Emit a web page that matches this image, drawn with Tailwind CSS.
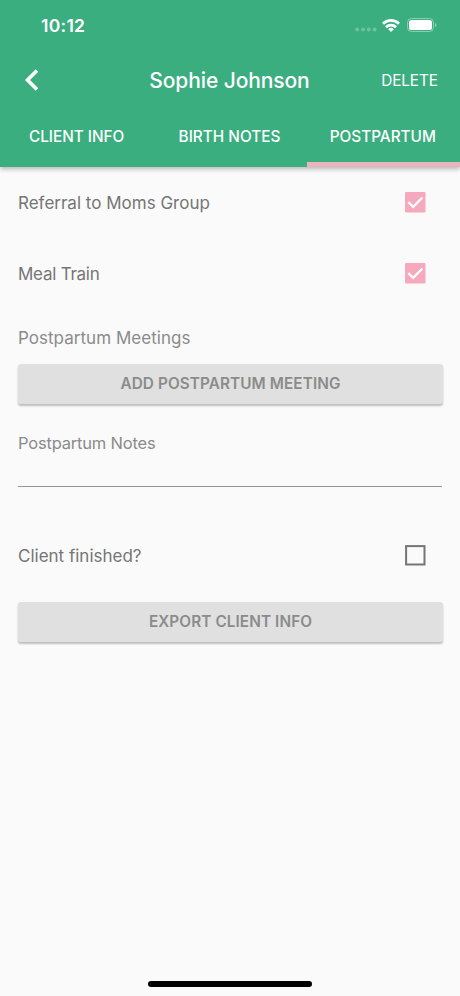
<!DOCTYPE html>
<html lang="en">
<head>
<meta charset="utf-8">
<title>Sophie Johnson</title>
<script src="https://cdn.jsdelivr.net/npm/@tailwindcss/browser@4"></script>
</head>
<body class="bg-[#fafafa]">
<div class="w-[460px] h-[996px] flex flex-col overflow-hidden bg-[#fafafa] font-['Inter',sans-serif] text-[#757575] whitespace-nowrap">
  <header class="h-[167px] shrink-0 flex flex-col bg-[#3aae7f] text-white shadow-[0_2px_5px_rgba(0,0,0,0.28)]">
    <div class="h-[50px] flex items-center justify-between pl-[41px] pr-[23px]">
      <span class="text-[17.5px] leading-[20px] pt-[2px] font-semibold tracking-[0.3px]">10:12</span>
      <div class="flex items-center">
        <svg class="w-[22px] h-[5px] mt-[9px] mr-[5px]" viewBox="0 0 22 5" fill="#fff" fill-opacity=".25"><circle cx="2.2" cy="2.5" r="2"/><circle cx="8" cy="2.5" r="2"/><circle cx="13.8" cy="2.5" r="2"/><circle cx="19.6" cy="2.5" r="2"/></svg>
        <svg class="w-[18px] h-[13px] mr-[7px]" viewBox="0 0 18 13" fill="none" stroke="#fff" stroke-width="2.8"><path d="M1 4.7a11.5 11.5 0 0 1 16 0"/><path d="M4 8.2a7.2 7.2 0 0 1 10 0"/><path d="M9 13 6.2 10.2a4 4 0 0 1 5.6 0z" fill="#fff" stroke="none"/></svg>
        <svg class="w-[30px] h-[14px]" viewBox="0 0 30 14"><rect x=".5" y=".5" width="26" height="13" rx="4" fill="none" stroke="#fff" stroke-opacity=".4"/><rect x="2" y="2" width="23" height="10" rx="2.6" fill="#fff"/><path d="M28 4.8c1.9.8 1.9 3.6 0 4.4z" fill="#fff" fill-opacity=".45"/></svg>
      </div>
    </div>
    <div class="h-[60px] grid grid-cols-[1fr_auto_1fr] items-center pl-[24px] pr-[22px]">
      <svg class="w-[15px] h-[22px]" viewBox="0 0 15 22" fill="none" stroke="#fff" stroke-width="3.6"><path d="M13 1.5 3.5 11 13 20.5"/></svg>
      <h1 class="text-[21px] leading-[26px] font-medium tracking-[-0.1px] pt-[2px] -ml-[3px]">Sophie Johnson</h1>
      <span class="text-[15.3px] tracking-[-0.05px] pt-[2px] justify-self-end">DELETE</span>
    </div>
    <nav class="h-[57px] grid grid-cols-3 text-[15.3px] font-medium text-center">
      <div class="flex items-center justify-center pb-[2px]">CLIENT INFO</div>
      <div class="flex items-center justify-center pb-[2px] pr-[1px] tracking-[0.03px]">BIRTH NOTES</div>
      <div class="flex items-center justify-center pt-[2px] pr-[1px] border-b-[5px] border-[#e9b3bf]">POSTPARTUM</div>
    </nav>
  </header>
  <main class="flex flex-col pl-[18px] pr-[18px] text-[17px]">
    <div class="h-[72px] flex items-center justify-between pr-[16px]"><span class="pt-[2px]">Referral to Moms Group</span>
      <svg class="w-[21px] h-[21px] mb-[1px]" viewBox="0 0 21 21"><rect width="20.5" height="20.5" rx="1" fill="#f6a8bd"/><path d="m3.3 10.2 4.9 4.6 9.2-9.3" fill="none" stroke="#fff" stroke-width="2.4"/></svg></div>
    <div class="h-[70px] flex items-center justify-between pr-[16px]"><span class="pt-[2px] tracking-[-0.25px]">Meal Train</span>
      <svg class="w-[21px] h-[21px] mb-[1px]" viewBox="0 0 21 21"><rect width="20.5" height="20.5" rx="1" fill="#f6a8bd"/><path d="m3.3 10.2 4.9 4.6 9.2-9.3" fill="none" stroke="#fff" stroke-width="2.4"/></svg></div>
    <div class="h-[55px] flex items-center text-[#8b8b8b] pt-[5px]"><span class="tracking-[0.03px]">Postpartum Meetings</span></div>
    <button class="h-[40px] w-[425px] rounded-[3px] bg-[#e0e0e0] text-[15.3px] tracking-[0.1px] font-semibold text-[#8b8b8b] shadow-[0_2px_2px_rgba(0,0,0,0.24)]">ADD POSTPARTUM MEETING</button>
    <div class="h-[83px] border-b border-[#959595] pt-[27px] text-[16.5px] text-[#8b8b8b]"><span class="tracking-[-0.2px]">Postpartum Notes</span></div>
    <div class="h-[115px] flex items-center justify-between pt-[22px] pr-[16px]"><span class="pt-[2px]">Client finished?</span>
      <svg class="w-[21px] h-[21px]" viewBox="0 0 21 21"><rect x="1.1" y="1.1" width="18.4" height="18.4" fill="none" stroke="#757575" stroke-width="2"/></svg></div>
    <button class="h-[40px] w-[425px] rounded-[3px] bg-[#e0e0e0] text-[15.3px] tracking-[0.1px] font-semibold text-[#8b8b8b] shadow-[0_2px_2px_rgba(0,0,0,0.24)]">EXPORT CLIENT INFO</button>
  </main>
  <div class="mt-auto mb-[9px] self-center w-[164px] h-[6px] rounded-full bg-black"></div>
</div>
</body>
</html>
